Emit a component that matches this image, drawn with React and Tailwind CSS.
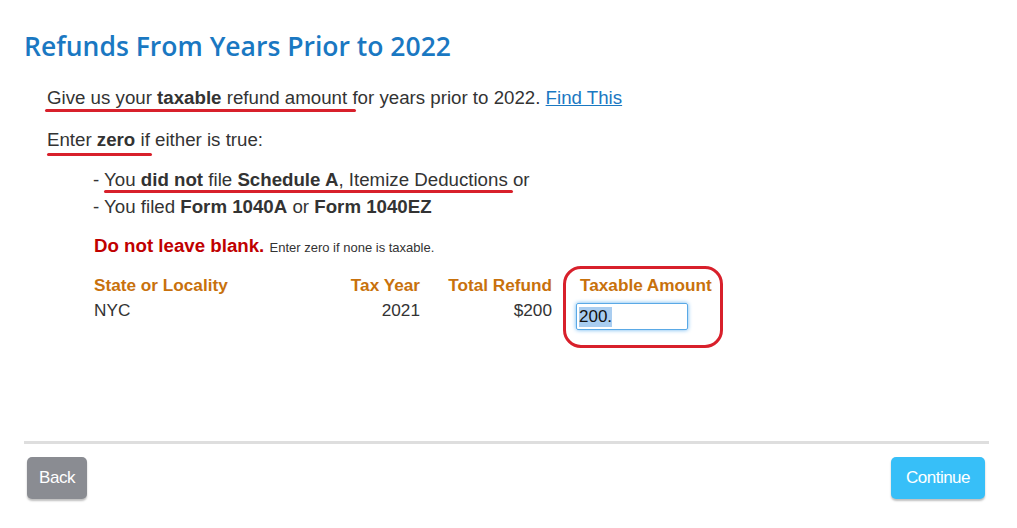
import React, { useEffect, useRef } from 'react';

const Underline = ({ className }) => (
  <span className={`absolute h-[3px] rounded-full bg-[#d8202b] ${className}`} />
);

const App = () => {
  const inputRef = useRef(null);

  useEffect(() => {
    if (inputRef.current) {
      inputRef.current.focus();
      inputRef.current.select();
    }
  }, []);

  return (
    <div className="w-[1017px] h-[528px] bg-white relative overflow-hidden" style={{ fontFamily: '"Liberation Sans", Arial, sans-serif' }}>
      <div className="px-[24px] pt-[30px]">
        <h1 className="text-[26.5px] leading-[32px] font-semibold text-[#1a78c2]" style={{ fontFamily: '"Open Sans", Lato, sans-serif' }}>
          Refunds From Years Prior to 2022
        </h1>

        {/* Intro */}
        <div className="pl-[23px] pt-[25px] text-[18.7px] text-[#333333]">
          <p className="relative leading-[22px]">
            Give us your <b>taxable</b> refund amount for years prior to 2022.{' '}
            <a href="#" className="text-[#1a78c2] underline">Find This</a>
            <Underline className="left-[-2px] top-[22px] w-[311px]" />
          </p>
          <p className="relative leading-[22px] mt-[20px]">
            Enter <b>zero</b> if either is true:
            <Underline className="left-0 top-[24px] w-[105px]" />
          </p>

          <ul className="pl-[46px] mt-[15px] leading-[27px]">
            <li className="relative">
              - You <b>did not</b> file <b>Schedule A</b>, Itemize Deductions or
              <Underline className="left-[11px] top-[24px] w-[409px]" />
            </li>
            <li>
              - You filed <b>Form 1040A</b> or <b>Form 1040EZ</b>
            </li>
          </ul>

          <p className="pl-[47px] mt-[15px] leading-[22px]">
            <b className="text-[#c00000]">Do not leave blank.</b>{' '}
            <span className="text-[13px]">Enter zero if none is taxable.</span>
          </p>

          {/* Table */}
          <div className="pl-[47px] mt-[13px] flex text-[17.2px]">
            <div className="w-[200px]">
              <div className="font-bold text-[#c8710c] leading-[26px]">State or Locality</div>
              <div className="leading-[24px]">NYC</div>
            </div>
            <div className="w-[126px] text-right">
              <div className="font-bold text-[#c8710c] leading-[26px]">Tax Year</div>
              <div className="leading-[24px]">2021</div>
            </div>
            <div className="w-[132px] text-right">
              <div className="font-bold text-[#c8710c] leading-[26px]">Total Refund</div>
              <div className="leading-[24px]">$200</div>
            </div>
            <div className="relative pl-[28px]">
              <div className="font-bold text-[#c8710c] leading-[26px]">Taxable Amount</div>
              <input
                ref={inputRef}
                defaultValue="200."
                className="-ml-[4px] mt-[5px] w-[112px] h-[27px] px-[2px] text-[17px] text-[#111] border border-[#5aa9e6] rounded-[2px] shadow-[0_0_4px_#66b3f0] outline-none selection:bg-[#a9cdf0]"
              />
              {/* annotation circle */}
              <span className="absolute left-[11px] top-[-6px] w-[160px] h-[82px] border-[3px] border-[#d8202b] rounded-[18px]" />
            </div>
          </div>
        </div>
      </div>

      {/* Footer */}
      <div className="absolute left-[24px] right-[28px] top-[441px] h-[3px] bg-[#dedede]" />
      <div className="absolute left-[27px] right-[32px] top-[457px] flex justify-between">
        <button className="h-[42px] w-[60px] rounded-[5px] bg-[#8a8c92] text-white text-[17px] shadow-[0_2px_2px_rgba(0,0,0,0.25)] tracking-[-0.5px]">
          Back
        </button>
        <button className="h-[42px] w-[94px] rounded-[5px] bg-[#37bff8] text-white text-[17px] shadow-[0_2px_2px_rgba(0,0,0,0.25)] tracking-[-0.5px]">
          Continue
        </button>
      </div>
    </div>
  );
};

export default App;
